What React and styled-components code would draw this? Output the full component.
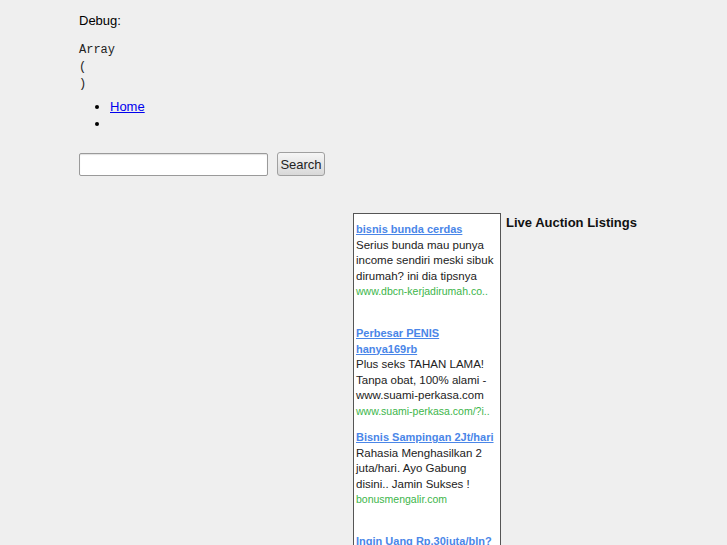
import React from 'react';
import styled, { createGlobalStyle } from 'styled-components';

const GlobalStyle = createGlobalStyle`
  html, body {
    margin: 0;
    padding: 0;
    background: #efefef;
  }
  body {
    font-family: "Liberation Sans", Arial, sans-serif;
    font-size: 13px;
    color: #000;
  }
`;

const Page = styled.div`
  padding: 13px 0 0 79px;
  height: 532px;
  overflow: hidden;
`;

const DebugLabel = styled.p`
  margin: 0 0 13px;
  line-height: 16px;
`;

const DebugDump = styled.pre`
  margin: 0;
  font-family: "Courier New", "Liberation Mono", monospace;
  font-size: 12px;
  line-height: 17px;
  color: #222;
`;

const Menu = styled.ul`
  margin: 5px 0 0;
  padding-left: 31px;
  line-height: 17px;
`;

const MenuItem = styled.li`
  a {
    color: #0000ee;
  }
`;

const SearchForm = styled.form`
  display: flex;
  align-items: center;
  gap: 9px;
  margin-top: 20px;
`;

const SearchInput = styled.input`
  box-sizing: border-box;
  width: 189px;
  height: 23px;
  border: 1px solid #9a9a9a;
  border-radius: 2px;
  background: #fff;
  box-shadow: inset 0 1px 1px rgba(0, 0, 0, 0.12);
`;

const SearchButton = styled.button`
  box-sizing: border-box;
  height: 24px;
  width: 48px;
  padding: 0;
  font-family: "Liberation Sans", Arial, sans-serif;
  font-size: 13px;
  color: #222;
  border: 1px solid #a0a0a0;
  border-radius: 3px;
  background: linear-gradient(#f6f6f6, #d8d8d8);
`;

const Columns = styled.div`
  display: flex;
  align-items: flex-start;
  margin-top: 37px;
`;

const Spacer = styled.div`
  width: 274px;
  flex: none;
`;

const AdBox = styled.div`
  width: 148px;
  height: 600px;
  flex: none;
  border: 1px solid #555;
  background: #fff;
  padding: 8px 0 0 2px;
  box-sizing: border-box;
`;

const Ad = styled.div`
  height: 104px;
  font-size: 11px;
  line-height: 15.5px;
`;

const AdTitle = styled.a`
  display: block;
  font-weight: bold;
  color: #4a86e8;
  text-decoration: underline;
`;

const AdText = styled.div`
  color: #222;
  font-size: 11.5px;
`;

const AdUrl = styled.div`
  color: #3cb54a;
  font-size: 10.5px;
`;

const SideTitle = styled.h3`
  margin: 1px 0 0 5px;
  font-size: 13px;
  line-height: 17px;
  font-weight: bold;
  color: #111;
`;

const ads = [
  { title: 'bisnis bunda cerdas', text: 'Serius bunda mau punya income sendiri meski sibuk dirumah? ini dia tipsnya', url: 'www.dbcn-kerjadirumah.co..' },
  { title: 'Perbesar PENIS hanya169rb', text: 'Plus seks TAHAN LAMA! Tanpa obat, 100% alami - www.suami-perkasa.com', url: 'www.suami-perkasa.com/?i..' },
  { title: 'Bisnis Sampingan 2Jt/hari', text: 'Rahasia Menghasilkan 2 juta/hari. Ayo Gabung disini.. Jamin Sukses !', url: 'bonusmengalir.com' },
  { title: 'Ingin Uang Rp.30juta/bln?', text: '', url: '' },
];

export default function App() {
  return (
    <>
      <GlobalStyle />
      <Page>
        <DebugLabel>Debug:</DebugLabel>
        <DebugDump>{'Array\n(\n)'}</DebugDump>
        <Menu>
          <MenuItem><a href="#">Home</a></MenuItem>
          <MenuItem>&nbsp;</MenuItem>
        </Menu>
        <SearchForm onSubmit={e => e.preventDefault()}>
          <SearchInput type="text" />
          <SearchButton type="submit">Search</SearchButton>
        </SearchForm>
        <Columns>
          <Spacer />
          <AdBox>
            {ads.map(ad => (
              <Ad key={ad.title}>
                <AdTitle href="#">{ad.title}</AdTitle>
                {ad.text && <AdText>{ad.text}</AdText>}
                {ad.url && <AdUrl>{ad.url}</AdUrl>}
              </Ad>
            ))}
          </AdBox>
          <SideTitle>Live Auction Listings</SideTitle>
        </Columns>
      </Page>
    </>
  );
}
